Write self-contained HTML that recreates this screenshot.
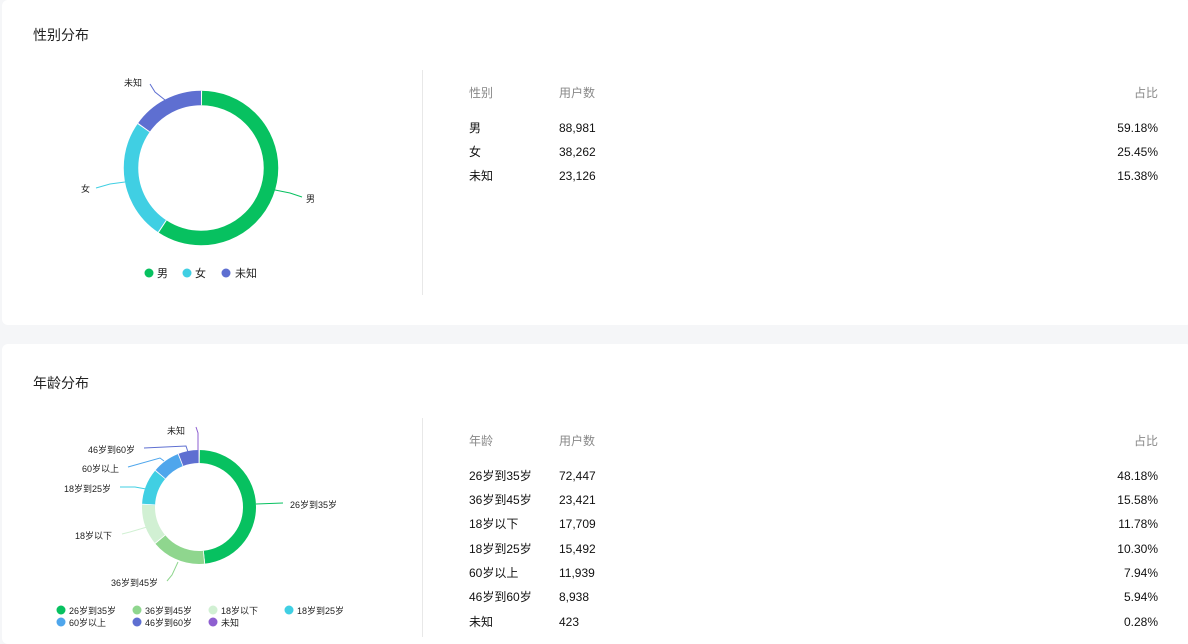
<!DOCTYPE html>
<html><head><meta charset="utf-8"><style>
*{margin:0;padding:0;box-sizing:border-box}
body{width:1188px;height:637px;background:#f5f6f8;font-family:"Liberation Sans","Noto Sans CJK SC",sans-serif;color:#222;position:relative;overflow:hidden}
.card{position:absolute;left:2px;width:1190px;background:#fff;border-radius:6px}
.t{position:absolute;font-size:14px;color:#222}
.div{position:absolute;left:422px;width:1px;background:#e8e8e8}
.row{position:absolute;left:469px;width:689px;font-size:12px;height:16px;line-height:16px;color:#111}
.row span{position:absolute}
.row .a{left:0}.row .b{left:90px}.row .c{right:0}
.row.h{color:#888}
svg text{font-family:"Liberation Sans","Noto Sans CJK SC",sans-serif;font-size:9px;fill:#222}
</style></head><body>
<div class="card" style="top:0;height:325px"></div>
<div class="card" style="top:344px;height:300px"></div>
<div class="t" style="left:33px;top:25px">性别分布</div>
<div class="t" style="left:33px;top:373px">年龄分布</div>
<div class="div" style="top:70px;height:225px"></div>
<div class="div" style="top:418px;height:219px"></div>

<div class="row h" style="top:85px"><span class="a">性别</span><span class="b">用户数</span><span class="c">占比</span></div>
<div class="row" style="top:120px"><span class="a">男</span><span class="b">88,981</span><span class="c">59.18%</span></div>
<div class="row" style="top:144px"><span class="a">女</span><span class="b">38,262</span><span class="c">25.45%</span></div>
<div class="row" style="top:168px"><span class="a">未知</span><span class="b">23,126</span><span class="c">15.38%</span></div>

<div class="row h" style="top:433px"><span class="a">年龄</span><span class="b">用户数</span><span class="c">占比</span></div>
<div class="row" style="top:468px"><span class="a">26岁到35岁</span><span class="b">72,447</span><span class="c">48.18%</span></div>
<div class="row" style="top:492px"><span class="a">36岁到45岁</span><span class="b">23,421</span><span class="c">15.58%</span></div>
<div class="row" style="top:516px"><span class="a">18岁以下</span><span class="b">17,709</span><span class="c">11.78%</span></div>
<div class="row" style="top:541px"><span class="a">18岁到25岁</span><span class="b">15,492</span><span class="c">10.30%</span></div>
<div class="row" style="top:565px"><span class="a">60岁以上</span><span class="b">11,939</span><span class="c">7.94%</span></div>
<div class="row" style="top:589px"><span class="a">46岁到60岁</span><span class="b">8,938</span><span class="c">5.94%</span></div>
<div class="row" style="top:614px"><span class="a">未知</span><span class="b">423</span><span class="c">0.28%</span></div>

<svg width="422" height="637" style="position:absolute;left:0;top:0">
<g transform="rotate(-90 201 168)" fill="none" stroke-width="14.5">
<circle cx="201" cy="168" r="70" stroke="#07c160" stroke-dasharray="260.3 500"/>
<circle cx="201" cy="168" r="70" stroke="#40cfe3" stroke-dasharray="111.9 500" stroke-dashoffset="-260.3"/>
<circle cx="201" cy="168" r="70" stroke="#5e6fd1" stroke-dasharray="67.6 500" stroke-dashoffset="-372.2"/>
<circle cx="201" cy="168" r="70" stroke="#fff" stroke-dasharray="1 259.3 1 110.9 1 66.6"/>
</g>
<polyline points="275,190 290,193 302,197" fill="none" stroke="#07c160"/>
<text x="306" y="202">男</text>
<polyline points="125,182 110,184 96,188" fill="none" stroke="#40cfe3"/>
<text x="81" y="192">女</text>
<polyline points="165,100 155,92 150,84" fill="none" stroke="#5e6fd1"/>
<text x="124" y="86">未知</text>
<circle cx="149" cy="273" r="4.5" fill="#07c160"/><text x="157" y="277" style="font-size:11px">男</text>
<circle cx="187" cy="273" r="4.5" fill="#40cfe3"/><text x="195" y="277" style="font-size:11px">女</text>
<circle cx="226" cy="273" r="4.5" fill="#5e6fd1"/><text x="235" y="277" style="font-size:11px">未知</text>

<g transform="rotate(-90 199 507)" fill="none" stroke-width="13">
<circle cx="199" cy="507" r="50.5" stroke="#07c160" stroke-dasharray="152.9 400"/>
<circle cx="199" cy="507" r="50.5" stroke="#8fd68e" stroke-dasharray="49.4 400" stroke-dashoffset="-152.9"/>
<circle cx="199" cy="507" r="50.5" stroke="#d1f0d3" stroke-dasharray="37.4 400" stroke-dashoffset="-202.3"/>
<circle cx="199" cy="507" r="50.5" stroke="#40cfe3" stroke-dasharray="32.7 400" stroke-dashoffset="-239.7"/>
<circle cx="199" cy="507" r="50.5" stroke="#4fa6ec" stroke-dasharray="25.2 400" stroke-dashoffset="-272.4"/>
<circle cx="199" cy="507" r="50.5" stroke="#5e6fd1" stroke-dasharray="18.8 400" stroke-dashoffset="-297.6"/>
<circle cx="199" cy="507" r="50.5" stroke="#8e5fd0" stroke-dasharray="1 400" stroke-dashoffset="-316.4"/>
<circle cx="199" cy="507" r="50.5" stroke="#fff" stroke-dasharray="0.8 152.1 0.8 48.6 0.8 36.6 0.8 31.9 0.8 24.4 0.8 18 0.8 400"/>
</g>
<g fill="none" stroke-width="1">
<polyline points="256,504 283,503" stroke="#07c160"/>
<polyline points="178,562 172,575 167,581" stroke="#8fd68e"/>
<polyline points="147,527 130,532 122,534" stroke="#d1f0d3"/>
<polyline points="146,489 135,487 120,487" stroke="#40cfe3"/>
<polyline points="164,461 160,458 128,467" stroke="#4fa6ec"/>
<polyline points="188,452 186,446 144,448" stroke="#5e6fd1"/>
<polyline points="198,450 198,433 196,427" stroke="#8e5fd0"/>
</g>
<text x="290" y="508">26岁到35岁</text>
<text x="111" y="586">36岁到45岁</text>
<text x="75" y="539">18岁以下</text>
<text x="64" y="492">18岁到25岁</text>
<text x="82" y="472">60岁以上</text>
<text x="88" y="453">46岁到60岁</text>
<text x="167" y="434">未知</text>
<circle cx="61" cy="610" r="4.5" fill="#07c160"/><text x="69" y="614">26岁到35岁</text>
<circle cx="137" cy="610" r="4.5" fill="#8fd68e"/><text x="145" y="614">36岁到45岁</text>
<circle cx="213" cy="610" r="4.5" fill="#d1f0d3"/><text x="221" y="614">18岁以下</text>
<circle cx="289" cy="610" r="4.5" fill="#40cfe3"/><text x="297" y="614">18岁到25岁</text>
<circle cx="61" cy="622" r="4.5" fill="#4fa6ec"/><text x="69" y="626">60岁以上</text>
<circle cx="137" cy="622" r="4.5" fill="#5e6fd1"/><text x="145" y="626">46岁到60岁</text>
<circle cx="213" cy="622" r="4.5" fill="#8e5fd0"/><text x="221" y="626">未知</text>
</svg>
</body></html>
